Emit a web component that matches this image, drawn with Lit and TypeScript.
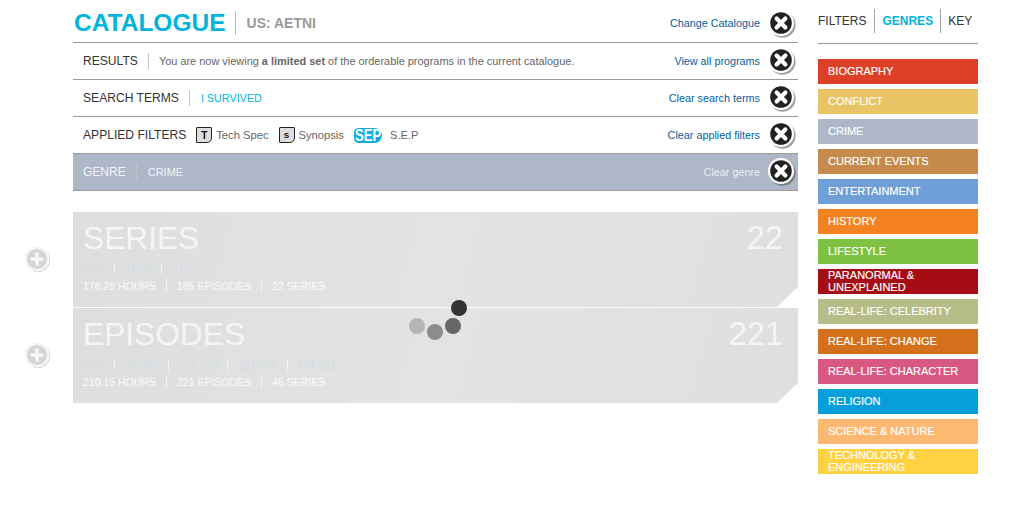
import { LitElement, html, css, svg } from "lit";
import { customElement } from "lit/decorators.js";

const closeIcon = html`<svg class="close" width="30" height="30" viewBox="0 0 30 30">
  <circle cx="15.6" cy="15.8" r="13" fill="#444" opacity=".5"/>
  <circle cx="14" cy="14" r="13" fill="#fff"/>
  <circle cx="14" cy="14" r="10.8" fill="#222"/>
  <path d="M9.6 9.6 18.4 18.4M18.4 9.6 9.6 18.4" stroke="#fff" stroke-width="4.2" stroke-linecap="round"/>
</svg>`;

const plusIcon = html`<svg width="28" height="28" viewBox="0 0 28 28">
  <circle cx="14.8" cy="14.8" r="12.4" fill="#bbb" opacity=".6"/>
  <circle cx="14" cy="14" r="12.4" fill="#f6f6f6"/>
  <circle cx="14" cy="14" r="10" fill="#d4d4d4"/>
  <path d="M14 7.5V20.5M7.5 14H20.5" stroke="#f6f6f6" stroke-width="3.6"/>
</svg>`;

const genres: [string, string][] = [
  ["BIOGRAPHY", "#de4027"],
  ["CONFLICT", "#e8c464"],
  ["CRIME", "#aeb7c8"],
  ["CURRENT EVENTS", "#c68b4c"],
  ["ENTERTAINMENT", "#6f9fd6"],
  ["HISTORY", "#f58220"],
  ["LIFESTYLE", "#7fc241"],
  ["PARANORMAL & UNEXPLAINED", "#a60c14"],
  ["REAL-LIFE: CELEBRITY", "#b7bd89"],
  ["REAL-LIFE: CHANGE", "#d4701b"],
  ["REAL-LIFE: CHARACTER", "#d95881"],
  ["RELIGION", "#069fdb"],
  ["SCIENCE & NATURE", "#fdb872"],
  ["TECHNOLOGY & ENGINEERING", "#ffd143"],
];

@customElement("app-root")
export class AppRoot extends LitElement {
  static styles = css`
    :host {
      display: block;
      position: relative;
      width: 1023px;
      height: 505px;
      background: #fff;
      overflow: hidden;
      font-family: "Liberation Sans", Arial, sans-serif;
      color: #333;
    }
    .page {
      display: flex;
      gap: 20px;
      padding-left: 73px;
    }
    .main { width: 725px; }
    .head, .row {
      display: flex;
      align-items: center;
      justify-content: space-between;
      border-bottom: 1px solid #9a9a9a;
    }
    .head { height: 38px; padding-top: 4px; }
    .row { height: 36px; padding-left: 10px; }
    .left, .right { display: flex; align-items: center; }
    .title {
      font-size: 24.5px;
      font-weight: bold;
      color: #00b4dc;
      padding: 0 9px 0 1px;
      border-right: 1px solid #bbb;
      line-height: 24px;
    }
    .sub {
      font-size: 14px;
      font-weight: bold;
      color: #9a9a9a;
      padding-left: 11px;
    }
    .label {
      font-size: 12.1px;
      color: #333;
      line-height: 16px;
    }
    .sep {
      padding-right: 10px;
      border-right: 1px solid #c4c4c4;
    }
    .msg { font-size: 10.95px; color: #666; padding-left: 10px; }
    .term { font-size: 10.8px; color: #00b4dc; padding-left: 11px; }
    .action { font-size: 10.8px; color: #05619a; }
    .close { margin: 0 1px -1px 7px; display: block; flex: none; position: relative; top: -1px; }
    .head .close { top: 0; }
    .row.active { background: #aeb7c8; }
    .row.active .label { color: #f2f4f7; font-size: 12px; }
    .row.active .term { color: #f2f4f7; font-size: 11px; padding-left: 11px; }
    .row.active .action { color: #eceef3; }
    .filters { display: flex; align-items: center; font-size: 11.2px; color: #666; }
    .badge {
      width: 14px;
      height: 14px;
      border: 1px solid #222;
      border-radius: 1px 1px 5px 1px;
      background: #ddd;
      color: #111;
      font-size: 10px;
      font-weight: bold;
      display: flex;
      align-items: center;
      justify-content: center;
      margin: 0 4px 0 10px;
    }
    .badge.small { font-size: 8px; margin-left: 10px; }
    .sepbadge {
      background: #12addc;
      border-radius: 5px 8px 8px 5px;
      height: 15px;
      width: 28px;
      margin: 0 8px 0 10px;
      display: flex;
      align-items: center;
      justify-content: center;
      overflow: hidden;
    }
    .sepbadge span {
      color: #fff;
      font-size: 16px;
      font-weight: bold;
      line-height: 15px;
      transform: scaleX(0.82);
      white-space: nowrap;
    }
    .panels { margin-top: 21px; display: flex; flex-direction: column; gap: 1px; }
    .panel {
      position: relative;
      height: 95px;
      background: linear-gradient(105deg, #dedede, #e3e3e1 50%, #dfdfdf);
      clip-path: polygon(0 0, 100% 0, 100% 75px, 704px 100%, 0 100%);
      padding: 10px 15px 0 10px;
      box-sizing: border-box;
      color: #f5f5f5;
    }
    .ptop { display: flex; justify-content: space-between; align-items: flex-start; }
    .ptitle, .pcount { font-size: 31.7px; line-height: 32px; }
    .pcount { font-size: 32.5px; }
    .pages, .stats { display: flex; align-items: center; font-size: 10.5px; }
    .pages { color: #d0dce8; margin-top: 8px; height: 14px; }
    .stats { color: #fafafa; margin-top: 3px; height: 14px; }
    .pages span, .stats span { padding: 0 10px; border-left: 1px solid #f5f5f5; line-height: 10px; }
    .pages span:first-child, .stats span:first-child { padding-left: 0; border-left: 0; }
    .plus { position: absolute; left: 23px; display: block; }
    .p1 { top: 245px; }
    .p2 { top: 341px; }
    .spinner { position: absolute; left: 409px; top: 300px; }
    .side { width: 160px; }
    .tabs {
      border-bottom: 1px solid #9a9a9a;
      display: flex;
      align-items: flex-start;
      padding-top: 9px;
      height: 34px;
      font-size: 12px;
    }
    .tabs span { height: 24px; line-height: 24px; padding: 0 7px; border-left: 1px solid #a5a5a5; }
    .tabs span:first-child { padding: 0 8px 0 0; border-left: 0; }
    .tabs .on { color: #00b4dc; font-weight: bold; }
    .genres { margin-top: 15px; display: flex; flex-direction: column; gap: 5px; }
    .genre {
      height: 25px;
      box-sizing: border-box;
      display: flex;
      align-items: center;
      padding: 0 10px 2px;
      color: #fff;
      font-size: 11px;
      line-height: 12px;
      overflow: hidden;
      -webkit-text-stroke: 0.15px #fff;
    }
  `;

  private row(left: unknown, action: string, active = false) {
    return html`<div class="row ${active ? "active" : ""}">
      <div class="left">${left}</div>
      <div class="right"><span class="action">${action}</span>${closeIcon}</div>
    </div>`;
  }

  private panel(title: string, count: string, pages: string[], stats: string[]) {
    return html`<div class="panel">
      <div class="ptop"><div class="ptitle">${title}</div><div class="pcount">${count}</div></div>
      <div class="pages">${pages.map((p) => html`<span>${p}</span>`)}</div>
      <div class="stats">${stats.map((p) => html`<span>${p}</span>`)}</div>
    </div>`;
  }

  render() {
    return html`<div class="page">
        <div class="main">
          <div class="head">
            <div class="left"><div class="title">CATALOGUE</div><div class="sub">US: AETNI</div></div>
            <div class="right"><span class="action">Change Catalogue</span>${closeIcon}</div>
          </div>
          ${this.row(
            html`<span class="label sep">RESULTS</span><span class="msg">You are now viewing <b>a limited set</b> of the orderable programs in the current catalogue.</span>`,
            "View all programs"
          )}
          ${this.row(
            html`<span class="label sep">SEARCH TERMS</span><span class="term">I SURVIVED</span>`,
            "Clear search terms"
          )}
          ${this.row(
            html`<span class="label">APPLIED FILTERS</span>
              <div class="filters">
                <span class="badge">T</span>Tech Spec
                <span class="badge small">S</span>Synopsis
                <span class="sepbadge"><span>SEP</span></span>S.E.P
              </div>`,
            "Clear applied filters"
          )}
          ${this.row(
            html`<span class="label sep">GENRE</span><span class="term">CRIME</span>`,
            "Clear genre",
            true
          )}
          <div class="panels">
            ${this.panel("SERIES", "22", ["1-10", "11-20", "21-22"], ["176.29 HOURS", "185 EPISODES", "22 SERIES"])}
            ${this.panel("EPISODES", "221", ["1-50", "51-100", "101-150", "151-200", "201-221"], ["210.15 HOURS", "221 EPISODES", "46 SERIES"])}
          </div>
        </div>
        <div class="side">
          <div class="tabs"><span>FILTERS</span><span class="on">GENRES</span><span>KEY</span></div>
          <div class="genres">
            ${genres.map(([n, c]) => html`<div class="genre" style="background:${c}"><span>${n}</span></div>`)}
          </div>
        </div>
      </div>
      <div class="p1 plus">${plusIcon}</div>
      <div class="p2 plus">${plusIcon}</div>
      <svg class="spinner" width="60" height="44" viewBox="0 0 60 44">
        ${svg`<circle cx="50" cy="8" r="8" fill="#333"/>
        <circle cx="44" cy="26" r="8" fill="#666"/>
        <circle cx="26" cy="32" r="8" fill="#8c8c8c"/>
        <circle cx="8" cy="26" r="8" fill="#b5b5b5"/>`}
      </svg>`;
  }
}
